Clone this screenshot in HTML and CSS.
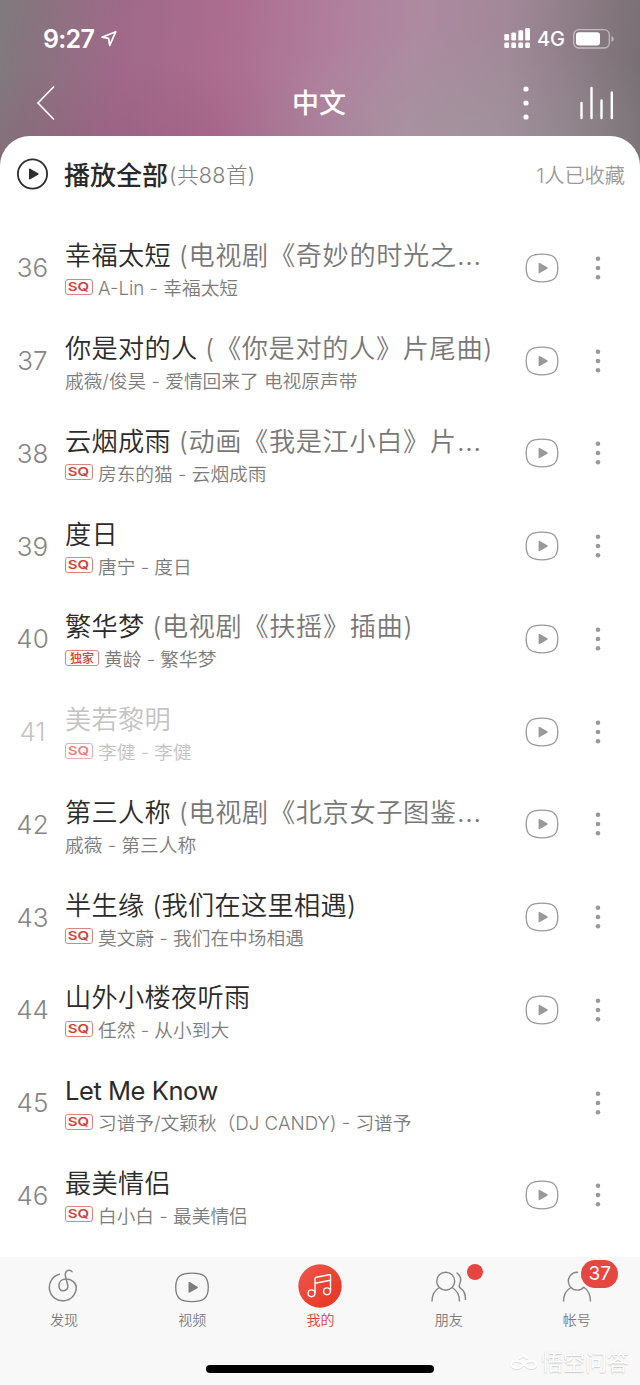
FILE: index.html
```html
<!DOCTYPE html>
<html lang="zh-CN">
<head>
<meta charset="utf-8">
<title>中文</title>
<link rel="stylesheet" href="styles.css">
</head>
<body>
<svg class="defs" width="0" height="0">
  <symbol id="video" viewBox="0 0 34 30"><path d="M17 1.200C5.500 1.200 1.200 4.500 1.200 15S5.500 28.800 17 28.800 32.800 25.500 32.800 15 28.500 1.200 17 1.200Z" fill="none" stroke="currentColor" stroke-width="1.300"/><path d="M13.600 10.600v8.800q0 1.300 1.200.7l7.500-4.300q1.100-.8 0-1.500l-7.500-4.400q-1.200-.6-1.200.7Z" fill="currentColor"/></symbol>
  <symbol id="dots" viewBox="0 0 6 24"><circle cx="3" cy="2.800" r="2.300"/><circle cx="3" cy="12" r="2.300"/><circle cx="3" cy="21.200" r="2.300"/></symbol>
</svg>
<div class="app">
  <header class="header">
    <div class="status">
      <span class="time">9:27</span>
      <svg class="location" width="18" height="18" viewBox="0 0 18 18"><path d="M2 7.200 15.800 1.700 9.700 15.400 8.600 8.400Z" fill="none" stroke="#fff" stroke-width="1.700" stroke-linejoin="round"/></svg>
      <svg class="signal" width="27" height="21" viewBox="0 0 27 21" fill="#fff"><rect x=".3" y="6" width="4.800" height="6.500" rx="1.300"/><rect x="7.300" y="4.500" width="4.800" height="8" rx="1.300"/><rect x="14.300" y="2.300" width="4.800" height="10.200" rx="1.300"/><rect x="21.200" y="0" width="4.800" height="12.500" rx="1.300"/><rect x=".3" y="14.600" width="4.800" height="5.400" rx="1.300"/><rect x="7.300" y="14.600" width="4.800" height="5.400" rx="1.300"/><rect x="14.300" y="14.600" width="4.800" height="5.400" rx="1.300"/><rect x="21.200" y="14.600" width="4.800" height="5.400" rx="1.300"/></svg>
      <span class="network">4G</span>
      <svg class="battery" width="42" height="20" viewBox="0 0 42 20"><rect x=".7" y=".7" width="35.600" height="18.300" rx="5" fill="none" stroke="#fff" stroke-opacity=".5" stroke-width="1.300"/><rect x="3" y="3.200" width="24" height="13.400" rx="3" fill="#fff"/><path d="M38.500 7v6q2.300-1 2.300-3t-2.300-3Z" fill="#fff" fill-opacity=".5"/></svg>
    </div>
    <nav class="nav">
      <svg class="back" width="22" height="36" viewBox="0 0 22 36"><path d="M20 1.500 4 18 20 34.500" fill="none" stroke="#fff" stroke-width="1.700"/></svg>
      <h1 class="heading">中文</h1>
      <svg class="more" width="8" height="34" viewBox="0 0 8 34" fill="#fff"><circle cx="4" cy="3" r="2.600"/><circle cx="4" cy="17" r="2.600"/><circle cx="4" cy="31" r="2.600"/></svg>
      <svg class="bars" width="36" height="34" viewBox="0 0 36 34"><path d="M2.500 17v15M12.500 2v30M22.500 14.500V32M32.800 6.500V32" stroke="#fff" stroke-width="2.400" stroke-linecap="round"/></svg>
    </nav>
  </header>

  <main class="sheet">
    <div class="play-all">
      <svg class="play" width="32" height="32" viewBox="0 0 32 32"><circle cx="15.500" cy="16" r="14.600" fill="none" stroke="#2d2d2f" stroke-width="1.800"/><path d="M12 11.500v9q0 1.300 1.200.7l8-4.400q1.200-.8 0-1.600l-8-4.400q-1.200-.6-1.200.7Z" fill="#2d2d2f"/></svg>
      <b class="play-label">播放全部</b><span class="count">(共88首)</span>
      <span class="saved">1人已收藏</span>
    </div>
    <ol class="songs">
      <li class="song"><span class="num">36</span><div class="info"><p class="title">幸福太短 <i class="alt">(电视剧《奇妙的时光之<i class="cut">…</i></i></p><p class="sub"><span class="tag"><b>SQ</b></span>A-Lin - 幸福太短</p></div><svg class="mv"><use href="#video"/></svg><svg class="menu"><use href="#dots"/></svg></li>
      <li class="song"><span class="num">37</span><div class="info"><p class="title">你是对的人 <i class="alt">(《你是对的人》片尾曲)</i></p><p class="sub">戚薇/俊昊 - 爱情回来了 电视原声带</p></div><svg class="mv"><use href="#video"/></svg><svg class="menu"><use href="#dots"/></svg></li>
      <li class="song"><span class="num">38</span><div class="info"><p class="title">云烟成雨 <i class="alt">(动画《我是江小白》片<i class="cut">…</i></i></p><p class="sub"><span class="tag"><b>SQ</b></span>房东的猫 - 云烟成雨</p></div><svg class="mv"><use href="#video"/></svg><svg class="menu"><use href="#dots"/></svg></li>
      <li class="song"><span class="num">39</span><div class="info"><p class="title">度日</p><p class="sub"><span class="tag"><b>SQ</b></span>唐宁 - 度日</p></div><svg class="mv"><use href="#video"/></svg><svg class="menu"><use href="#dots"/></svg></li>
      <li class="song"><span class="num">40</span><div class="info"><p class="title">繁华梦 <i class="alt">(电视剧《扶摇》插曲)</i></p><p class="sub"><span class="tag exclusive">独家</span>黄龄 - 繁华梦</p></div><svg class="mv"><use href="#video"/></svg><svg class="menu"><use href="#dots"/></svg></li>
      <li class="song off"><span class="num">41</span><div class="info"><p class="title">美若黎明</p><p class="sub"><span class="tag"><b>SQ</b></span>李健 - 李健</p></div><svg class="mv"><use href="#video"/></svg><svg class="menu"><use href="#dots"/></svg></li>
      <li class="song"><span class="num">42</span><div class="info"><p class="title">第三人称 <i class="alt">(电视剧《北京女子图鉴<i class="cut">…</i></i></p><p class="sub">戚薇 - 第三人称</p></div><svg class="mv"><use href="#video"/></svg><svg class="menu"><use href="#dots"/></svg></li>
      <li class="song"><span class="num">43</span><div class="info"><p class="title">半生缘 (我们在这里相遇)</p><p class="sub"><span class="tag"><b>SQ</b></span>莫文蔚 - 我们在中场相遇</p></div><svg class="mv"><use href="#video"/></svg><svg class="menu"><use href="#dots"/></svg></li>
      <li class="song"><span class="num">44</span><div class="info"><p class="title">山外小楼夜听雨</p><p class="sub"><span class="tag"><b>SQ</b></span>任然 - 从小到大</p></div><svg class="mv"><use href="#video"/></svg><svg class="menu"><use href="#dots"/></svg></li>
      <li class="song"><span class="num">45</span><div class="info"><p class="title latin">Let Me Know</p><p class="sub"><span class="tag"><b>SQ</b></span>习谱予/文颖秋（DJ CANDY) - 习谱予</p></div><svg class="menu"><use href="#dots"/></svg></li>
      <li class="song"><span class="num">46</span><div class="info"><p class="title">最美情侣</p><p class="sub"><span class="tag"><b>SQ</b></span>白小白 - 最美情侣</p></div><svg class="mv"><use href="#video"/></svg><svg class="menu"><use href="#dots"/></svg></li>
    </ol>
  </main>

  <footer class="tabs">
    <div class="tab"><svg width="44" height="44" viewBox="0 0 44 44" fill="none" stroke="#858587" stroke-width="1.500" stroke-linecap="round"><path d="M17.300 10.300A13.500 13.500 0 1 0 34.300 23.300C34.300 18.500 29 14.800 23.500 15C19.500 15.200 17 18 17 21.500C17 24.800 18.500 26.800 21.200 26.800C24.500 26.800 26.400 24 25.700 21L23.600 12.800C22.500 8.700 24.500 6.300 27.300 6.300Q29 6.300 30 7.600"/></svg><span>发现</span></div>
    <div class="tab"><svg width="44" height="44" viewBox="0 0 44 44"><g color="#7c7c7e"><use href="#video" x="4.500" y="7.600" width="35" height="31.500"/></g></svg><span>视频</span></div>
    <div class="tab active"><svg width="44" height="44" viewBox="0 0 44 44"><defs><linearGradient id="red" x1="0" y1="0" x2="1" y2="1"><stop stop-color="#ee574d"/><stop offset="1" stop-color="#e7341f"/></linearGradient></defs><circle cx="22" cy="22" r="21.700" fill="url(#red)"/><g fill="none" stroke="#fff" stroke-width="1.400"><circle cx="13.500" cy="29.300" r="3.400"/><circle cx="29" cy="27.300" r="3.400"/><path d="M17 29V14.700q0-1.200 1.200-1.400l12.900-2.600q1.400-.3 1.400 1v15.500M17 19.300l15.400-3"/></g></svg><span>我的</span></div>
    <div class="tab"><svg width="44" height="44" viewBox="0 0 44 44" fill="none" stroke="#858587" stroke-width="1.400"><circle cx="18.700" cy="17.200" r="9"/><path d="M5 37.500q0-10 7.500-14M25 23.500q7.500 4 7.500 14M29.500 8.500q6.500 4.500 3 12-1 2 1 3.600Q39 28 38.500 36"/></svg><i class="dot"></i><span>朋友</span></div>
    <div class="tab"><svg width="44" height="44" viewBox="0 0 44 44" fill="none" stroke="#858587" stroke-width="1.400"><path d="M23 8.300A8.900 8.900 0 1 0 29 23M8.500 37.500q0-10 7.500-14M28.500 23q7 4.500 7 14.500"/></svg><b class="badge">37</b><span>帐号</span></div>
    <div class="home"></div>
    <div class="mark"><svg width="28" height="18" viewBox="0 0 28 18" fill="none" stroke-width="2" stroke-linecap="round"><g stroke="#dcdcdc" transform="translate(0 1)"><path d="M10 5q3-4 7 0M14 11q-4 5-8 4-5-1-5-4 2-4 6-3 4 0 7 3 4 4 7 4 5 0 5-4-1-3-5-3-4 0-7 3"/></g><path stroke="#fff" d="M10 5q3-4 7 0M14 11q-4 5-8 4-5-1-5-4 2-4 6-3 4 0 7 3 4 4 7 4 5 0 5-4-1-3-5-3-4 0-7 3"/></svg>悟空问答</div>
  </footer>
</div>
</body>
</html>
```

FILE: styles.css
```css
* { box-sizing: border-box; margin: 0; padding: 0; }
body { width: 640px; height: 1385px; overflow: hidden; font-family: Inter, "Noto Sans CJK SC", sans-serif; text-spacing-trim: space-all; }
i { font-style: normal; }
svg { flex: none; display: block; }
.defs { position: absolute; }
.app {
  height: 1385px;
  display: flex;
  flex-direction: column;
  background:
    radial-gradient(ellipse 300px 110px at 120px 170px, rgba(140, 75, 110, .3), transparent),
    radial-gradient(ellipse 240px 120px at 460px 150px, rgba(160, 156, 160, .55), transparent),
    linear-gradient(96deg, #7f7b7e 0, #87747e 35px, #a0698a 125px, #ab6c8f 225px, #b07e9d 330px, #ad8aa0 420px, #a18898 510px, #84777e 605px, #746d71 660px);
}
.header { height: 136px; flex: none; }
.status { height: 70px; display: flex; align-items: center; padding: 8px 25px 0 43px; color: #fff; }
.time { width: 57px; font-size: 25px; font-weight: 600; letter-spacing: -.7px; white-space: nowrap; }
.location { margin-top: -1px; }
.signal { margin-left: auto; margin-top: -2px; }
.network { margin: 0 8px 0 6px; font-size: 20px; font-weight: 500; }
.battery { margin-top: -1px; }
.nav { height: 66px; display: flex; align-items: center; padding: 0 25px 0 34px; }
.heading { flex: 1; margin-left: 236px; padding-top: 1px; color: #fff; font-size: 27px; font-weight: 500; line-height: 40px; }
.more { margin-right: 49px; }
.sheet { height: 1121px; flex: none; background: #fff; border-radius: 30px 30px 0 0; }
.play-all { height: 85.500px; display: flex; align-items: center; padding: 0 15px 9px 17px; }
.play-label { margin: -2px 0 0 15px; font-size: 26px; font-weight: 500; color: #292929; }
.count { margin: -2px 0 0 1px; font-size: 21.500px; font-weight: 300; letter-spacing: .4px; color: #808080; }
.saved { margin-left: auto; font-size: 20.200px; font-weight: 350; color: #999; }
.songs { list-style: none; }
.song { height: 92.750px; display: flex; align-items: center; padding-right: 38px; color: #2b2b2b; }
.num { width: 65px; text-align: center; font-size: 26px; font-weight: 300; color: #858585; }
.info { flex: 1; height: 66px; white-space: nowrap; }
.title { height: 38px; padding-top: 2.500px; line-height: 38px; font-size: 26.200px; font-weight: 350; letter-spacing: .3px; }
.latin { font-size: 25.500px; font-weight: 400; letter-spacing: -.45px; }
.alt { color: #777; letter-spacing: .65px; }
.cut { font-size: 29px; letter-spacing: .5px; line-height: 1; }
.sub { display: flex; align-items: center; height: 28px; font-size: 18.700px; font-weight: 350; color: #7c7c7c; white-space: pre; }
.tag { display: flex; align-items: center; justify-content: center; width: 28px; height: 16px; margin-right: 5px; border: 1px solid #d98580; border-radius: 3px; color: #d5403a; }
.tag b { font: 600 12px/14px Inter, sans-serif; transform: scaleX(1.250); }
.exclusive { width: 34px; font: 500 12px/14px "Noto Sans CJK SC", sans-serif; }
.mv { width: 34px; height: 30px; margin-right: 35px; color: #999; }
.menu { width: 8px; height: 24px; fill: #999; }
.off .num, .off .title, .off .sub { color: #c3c3c3; }
.off .tag { opacity: .65; }
.tabs { height: 128px; flex: none; display: grid; grid-template-columns: repeat(5, 128.200px); background: #f8f8f8; position: relative; }
.tab { position: relative; display: flex; flex-direction: column; align-items: center; padding-top: 7px; color: #7c7c7e; font-size: 14px; line-height: 24px; font-weight: 350; }
.tab.active { color: #d84540; }
.dot { position: absolute; left: 82px; top: 7px; width: 16px; height: 16px; border-radius: 50%; background: #e64640; }
.badge { position: absolute; left: 68.500px; top: 2.500px; width: 37px; height: 28px; border-radius: 14px; background: #e64640; color: #fff; text-align: center; font-size: 19px; line-height: 28px; font-weight: 400; }
.home { position: absolute; left: 206px; top: 107.500px; width: 228px; height: 8px; border-radius: 4px; background: #000; }
.mark { position: absolute; left: 510px; top: 91px; display: flex; align-items: center; gap: 3px; color: #fff; font-size: 22px; line-height: 28px; white-space: nowrap; text-shadow: 0 1px 1px #ccc, 0 0 1px #ddd; }
```
